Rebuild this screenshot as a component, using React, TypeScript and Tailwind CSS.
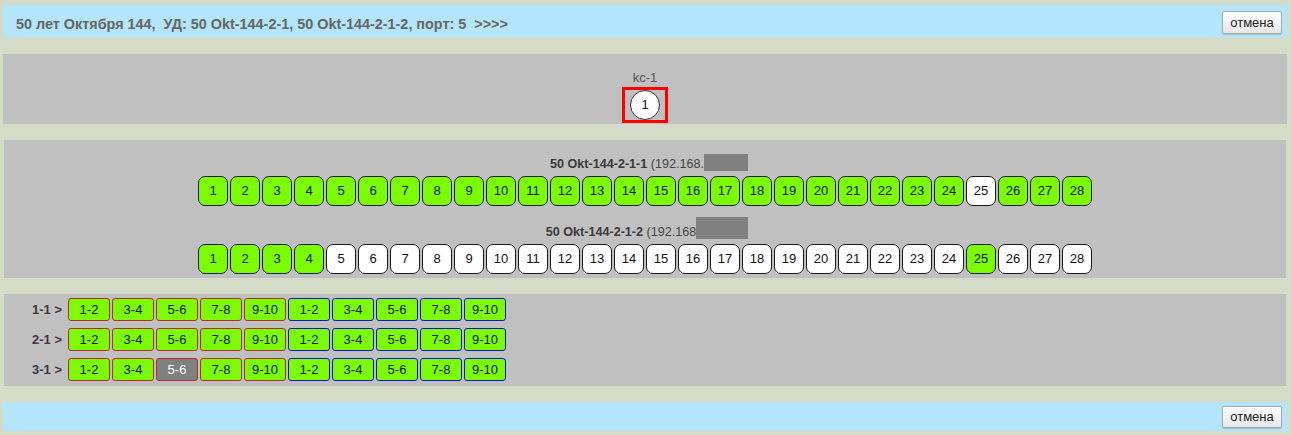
import React from "react";

// port state per switch: true = link up (green)
const SWITCHES = [
  { name: "50 Okt-144-2-1-1", ip: "(192.168.", boxW: "w-[44px]", shift: "pl-[8px]", tall: false, up: (p: number) => p !== 25 },
  { name: "50 Okt-144-2-1-2", ip: "(192.168", boxW: "w-[52px]", shift: "pl-[4px]", tall: true, up: (p: number) => p <= 4 || p === 25 },
];

const PORTS = Array.from({ length: 28 }, (_, i) => i + 1);
const PAIRS = ["1-2", "3-4", "5-6", "7-8", "9-10"];
const SLOTS = ["1-1", "2-1", "3-1"];

function CancelButton({ tall }: { tall?: boolean }) {
  return (
    <button
      type="button"
      className={`w-[60px] ${tall ? "h-[23px]" : "h-[22px]"} rounded-[2px] border border-[#a9a9a9] bg-gradient-to-b from-[#ffffff] to-[#e6e6e6] text-[13px] leading-none text-[#222] shadow-[0_1px_1px_rgba(0,0,0,0.15)]`}
    >
      отмена
    </button>
  );
}

function PortButton({ n, up }: { n: number; up: boolean }) {
  return (
    <div
      className={`flex h-[30px] w-[30px] items-center justify-center rounded-[7px] border border-[#1a1a1a] text-[13px] text-[#111] ${
        up ? "bg-[#7cfc00]" : "bg-white"
      }`}
    >
      {n}
    </div>
  );
}

function PairButton({ label, blue, off }: { label: string; blue: boolean; off?: boolean }) {
  let cls = "bg-[#7cfc00] text-[#111]";
  if (off) cls = "bg-[#808080] text-white";
  return (
    <div
      className={`flex h-[23px] w-[42px] items-center justify-center rounded-[3px] border text-[13px] ${cls} ${
        blue ? "border-[#1010e8]" : "border-[#b82a2a]"
      }`}
    >
      {label}
    </div>
  );
}

export default function App() {
  return (
    <div className="min-h-[435px] bg-[#d4dcc7] pl-[3px] pr-[4px] pt-[5px] font-['Liberation_Sans',Arial,sans-serif]">
      {/* Header bar */}
      <div className="flex h-[32px] items-start justify-between bg-[#b3e5fc]">
        <span className="mt-[11px] whitespace-pre pl-[13px] text-[14.4px] font-bold leading-[17px] text-[#666]">
          50 лет Октября 144,  УД: 50 Okt-144-2-1, 50 Okt-144-2-1-2, порт: 5  {">>>>"}
        </span>
        <div className="mr-[5px] mt-[5px]">
          <CancelButton tall />
        </div>
      </div>

      {/* Cable / kc */}
      <div className="mt-[17px] flex h-[70px] flex-col items-center bg-[#c0c0c0] pt-[16px]">
        <div className="text-[13px] leading-[16px] text-[#555]">kc-1</div>
        <div className="mt-px flex h-[36px] items-center border-[3px] border-[#ff0000] px-[5px]">
          <div className="flex h-[30px] w-[30px] items-center justify-center rounded-full border border-[#333] bg-white text-[13px] text-[#111]">
            1
          </div>
        </div>
      </div>

      {/* Switches */}
      <div className="mx-px mt-[16px] flex h-[138px] flex-col items-center bg-[#c0c0c0] pt-[14px]">
        {SWITCHES.map((sw, si) => (
          <div key={sw.name} className={`flex flex-col items-center ${si > 0 ? "mt-[16px]" : ""}`}>
            <div className={`mb-[2px] h-[20px] whitespace-nowrap text-[12.6px] leading-[20px] ${sw.shift}`}>
              <span className="font-bold text-[#3a3a3a]">{sw.name}</span>
              <span className="text-[#444]"> {sw.ip}</span>
              <span
                className={`inline-block ${sw.boxW} bg-[#808080] align-[-3px] ${
                  sw.tall ? "-mt-[5px] h-[22px]" : "h-[17px]"
                }`}
              />
            </div>
            <div className="flex gap-[2px]">
              {PORTS.map((p) => (
                <PortButton key={p} n={p} up={sw.up(p)} />
              ))}
            </div>
          </div>
        ))}
      </div>

      {/* Slots */}
      <div className="mx-px mt-[16px] flex h-[92px] flex-col gap-[7px] bg-[#c0c0c0] pt-[4px]">
        {SLOTS.map((slot, ri) => (
          <div key={slot} className="flex items-center gap-[6px]">
            <div className="w-[58px] text-right text-[13px] font-bold text-[#3a3a3a]">{slot} &gt;</div>
            <div className="flex gap-[2px]">
              {PAIRS.map((p, i) => (
                <PairButton key={"r" + p} label={p} blue={false} off={ri === 2 && i === 2} />
              ))}
              {PAIRS.map((p) => (
                <PairButton key={"b" + p} label={p} blue />
              ))}
            </div>
          </div>
        ))}
      </div>

      {/* Footer bar */}
      <div className="mt-[16px] flex h-[29px] items-center justify-end bg-[#b3e5fc] pr-[5px]">
        <CancelButton />
      </div>
    </div>
  );
}
